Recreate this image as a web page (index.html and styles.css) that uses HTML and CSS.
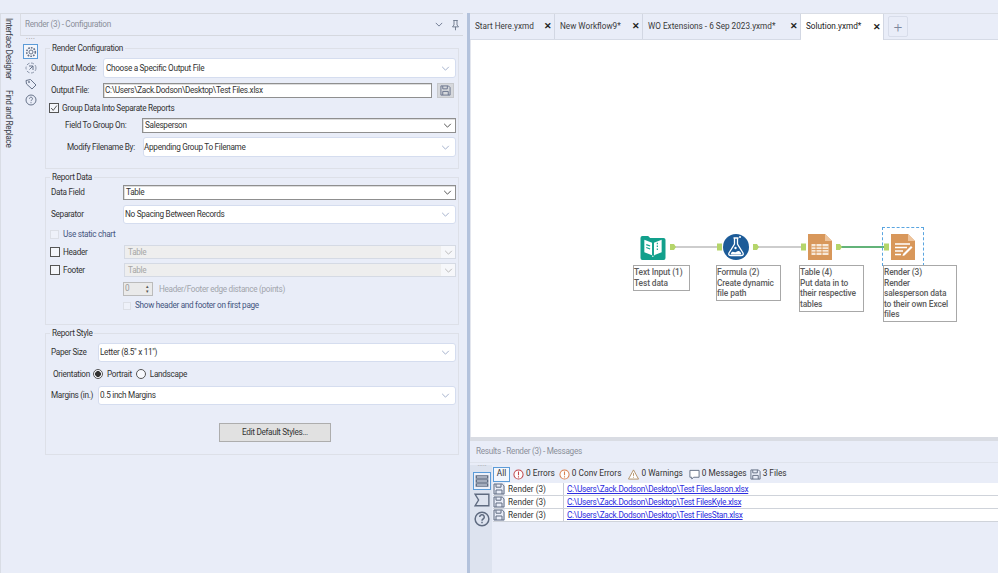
FILE: index.html
```html
<!DOCTYPE html>
<html lang="en">
<head>
<meta charset="utf-8">
<title>Render (3) - Configuration</title>
<link rel="stylesheet" href="styles.css">
</head>
<body>
<svg class="defs" width="0" height="0" aria-hidden="true">
  <symbol id="chev" viewBox="0 0 10 6"><path d="M1 1l4 4 4-4" fill="none" stroke="currentColor" stroke-width="1.1"/></symbol>
  <symbol id="save" viewBox="0 0 12 12"><path d="M1 1h8.2L11 2.8V11H1z" fill="none" stroke="currentColor" stroke-width="1"/><path d="M3 1.2v3h5v-3M3 11V7h6v4" fill="none" stroke="currentColor" stroke-width="1"/></symbol>
  <symbol id="alert" viewBox="0 0 12 12"><circle cx="6" cy="6" r="5" fill="#fff" stroke="currentColor" stroke-width="1.1"/><path d="M6 2.8v4M6 8v1.2" stroke="currentColor" stroke-width="1.2" fill="none"/></symbol>
</svg>

<aside class="rail">
  <span class="rail-tab">Interface Designer</span>
  <span class="rail-tab">Find and Replace</span>
</aside>

<section class="config">
  <header class="panel-head">
    <span class="panel-title">Render (3) - Configuration</span>
    <svg class="head-chev"><use href="#chev"/></svg>
    <svg class="pin" viewBox="0 0 12 14"><path d="M3 1h6M4 1v6L2 9.500h8L8 7V1M6 9.500V14" fill="none" stroke="#5f6b80" stroke-width="1.100"/></svg>
  </header>
  <div class="config-body">
    <nav class="side">
      <span class="dots">····</span>
      <span class="side-btn active">
        <svg viewBox="0 0 12 12"><circle cx="6" cy="6" r="2" fill="none" stroke="#67738a"/><circle cx="6" cy="6" r="4.300" fill="none" stroke="#67738a" stroke-width="1.600" stroke-dasharray="1.700 1.100"/></svg>
      </span>
      <span class="side-btn">
        <svg viewBox="0 0 12 12"><circle cx="6" cy="6" r="5" fill="none" stroke="#8a94a8" stroke-dasharray="3 1.600"/><path d="M4 4h4v4M8 4L4.500 7.500" fill="none" stroke="#67738a"/></svg>
      </span>
      <span class="side-btn">
        <svg viewBox="0 0 12 12"><path d="M1 2.500L5.500 1.500 11 7 7 11 1.500 6z" fill="none" stroke="#67738a"/><circle cx="4" cy="4" r=".9" fill="#67738a"/></svg>
      </span>
      <span class="side-btn">
        <svg viewBox="0 0 12 12"><circle cx="6" cy="6" r="5" fill="none" stroke="#67738a"/><path d="M4.500 4.600a1.500 1.500 0 1 1 2.200 1.400c-.5.300-.7.600-.7 1.100M6 8.200v1" fill="none" stroke="#67738a"/></svg>
      </span>
    </nav>
    <div class="form">
      <fieldset class="group g1">
        <legend>Render Configuration</legend>
        <div class="row h20 mt4 pl5"><label class="w52">Output Mode:</label><div class="select soft p2"><span>Choose a Specific Output File</span><svg class="chev"><use href="#chev"/></svg></div></div>
        <div class="row h15 mt5 pl5"><label class="w52">Output File:</label><div class="select hard path"><span>C:\Users\Zack.Dodson\Desktop\Test Files.xlsx</span></div><span class="save-btn"><svg><use href="#save"/></svg></span></div>
        <div class="row h10 mt5 pl3"><span class="check on"><svg viewBox="0 0 10 10"><path d="M1.500 5l2.500 3 4.500-6" fill="none" stroke="#444" stroke-width="1.100"/></svg></span><label class="check-label">Group Data Into Separate Reports</label></div>
        <div class="row h15 mt5 pl19"><label class="w77">Field To Group On:</label><div class="select hard"><span>Salesperson</span><svg class="chev dark"><use href="#chev"/></svg></div></div>
        <div class="row h20 mt4 pl21"><label class="w76">Modify Filename By:</label><div class="select soft p0"><span>Appending Group To Filename</span><svg class="chev"><use href="#chev"/></svg></div></div>
      </fieldset>

      <fieldset class="group g2">
        <legend>Report Data</legend>
        <div class="row h15 mt2 pl5"><label class="w72">Data Field</label><div class="select hard"><span>Table</span><svg class="chev dark"><use href="#chev"/></svg></div></div>
        <div class="row h19 mt5 pl5"><label class="w72">Separator</label><div class="select soft"><span>No Spacing Between Records</span><svg class="chev"><use href="#chev"/></svg></div></div>
        <div class="row h10 mt5 pl4"><span class="check faint"></span><label class="check-label blue">Use static chart</label></div>
        <div class="row h14 mt6 pl4"><span class="check"></span><label class="check-label w61">Header</label><div class="select off"><span>Table</span><i class="off-arrow"><svg class="chev"><use href="#chev"/></svg></i></div></div>
        <div class="row h14 mt4 pl4"><span class="check"></span><label class="check-label w61">Footer</label><div class="select off"><span>Table</span><i class="off-arrow"><svg class="chev"><use href="#chev"/></svg></i></div></div>
        <div class="row h14 mt5 pl77">
          <div class="spin"><span>0</span><i class="spin-arrows"><b>▴</b><b>▾</b></i></div>
          <label class="muted">Header/Footer edge distance (points)</label>
        </div>
        <div class="row h9 mt5 pl77"><span class="check faint small"></span><label class="check-label blue">Show header and footer on first page</label></div>
      </fieldset>

      <fieldset class="group g3">
        <legend>Report Style</legend>
        <div class="row h19 mt4 pl5"><label class="w47">Paper Size</label><div class="select soft"><span>Letter (8.5" x 11")</span><svg class="chev"><use href="#chev"/></svg></div></div>
        <div class="row h10 mt7 pl7">
          <label class="w40">Orientation</label>
          <span class="radio on"></span><label class="radio-label">Portrait</label>
          <span class="radio"></span><label class="radio-label">Landscape</label>
        </div>
        <div class="row h19 mt7 pl5"><label class="w47">Margins (in.)</label><div class="select soft"><span>0.5 inch Margins</span><svg class="chev"><use href="#chev"/></svg></div></div>
        <button class="edit-btn" type="button">Edit Default Styles...</button>
      </fieldset>
    </div>
  </div>
</section>

<div class="splitter"></div>

<main class="main">
  <div class="tabs">
    <div class="tab t1"><span>Start Here.yxmd</span><b>✕</b></div>
    <div class="tab t2"><span>New Workflow9*</span><b>✕</b></div>
    <div class="tab t3"><span>WO Extensions - 6 Sep 2023.yxmd*</span><b>✕</b></div>
    <div class="tab t4 current"><span>Solution.yxmd*</span><b>✕</b></div>
    <div class="tab-add">+</div>
  </div>

  <div class="canvas">
    <svg class="wires" width="528" height="120" viewBox="0 0 528 120">
      <path d="M204 207H246M287 207H330" transform="translate(0 -200)" stroke="#9b9b9b" stroke-width="1.200" fill="none"/>
      <path d="M370 7H413" stroke="#2f9a4c" stroke-width="1.500" fill="none"/>
      <g fill="#b5d56a">
        <path d="M199 4h4l2 3-2 3h-4zM282 4h4l2 3-2 3h-4zM365 4h4l2 3-2 3h-4z"/>
        <rect x="246" y="3.500" width="5" height="7"/><rect x="330" y="3.500" width="5" height="7"/><rect x="413" y="3.500" width="5" height="7"/>
      </g>
    </svg>

    <svg class="tool tool-text" viewBox="0 0 26 26">
      <path d="M0 3q0-2 2-2h6l2 2h14q2 0 2 2v19q0 2-2 2H2q-2 0-2-2z" fill="#12a08c"/>
      <path d="M4 5l8 3v13l-8-3zM22 5l-8 3v13l8-3z" fill="#fff"/>
      <path d="M12 21.500l1 1 1-1" stroke="#fff" fill="none"/>
      <path d="M17.500 8v1.500M17.500 11v1.500M17.500 14v1.500M6 10l4 1.500M6 13l4 1.500" stroke="#12a08c" stroke-width="1.200"/>
    </svg>
    <svg class="tool tool-formula" viewBox="0 0 26 26">
      <circle cx="13" cy="13" r="13" fill="#1c5b98"/>
      <path d="M10.500 4h5M11.500 4v6L6 19q-1 2.500 2 2.500h10q3 0 2-2.500l-5.500-9V4" fill="none" stroke="#fff" stroke-width="1.300"/>
      <path d="M8 19c2-3 3 0 5-1s3-2 5 1q.8 1.500-1 1.500H9q-1.800 0-1-1.500z" fill="#fff"/>
      <circle cx="12.500" cy="14" r="1.200" fill="#fff"/><circle cx="17" cy="3" r="1" fill="#fff"/>
    </svg>
    <svg class="tool tool-table" viewBox="0 0 24 26">
      <path d="M0 0h17l7 7v19H0z" fill="#d8975a"/>
      <path d="M17 0l7 7h-7z" fill="#eec49c"/>
      <path d="M3.500 10h17v11h-17z" fill="#f7e8d8"/>
      <path d="M3.500 12.800h17M3.500 15.500h17M3.500 18.200h17M8 10v11M14 10v11" stroke="#d8975a" stroke-width=".9"/>
    </svg>
    <svg class="tool tool-render" viewBox="0 0 24 26">
      <path d="M0 0h17l7 7v19H0z" fill="#d8975a"/>
      <path d="M17 0l7 7h-7z" fill="#eec49c"/>
      <path d="M4 10h15M4 13.500h12M4 17h8M4 20.500h6" stroke="#fff" stroke-width="1.500"/>
      <path d="M12 20l8-8 1.500 1.500-8 8-2 .5z" fill="#fff"/>
    </svg>

    <div class="selection"></div>

    <div class="note n1">Text Input (1)<br>Test data</div>
    <div class="note n2">Formula (2)<br>Create dynamic<br>file path</div>
    <div class="note n3">Table (4)<br>Put data in to<br>their respective<br>tables</div>
    <div class="note n4">Render (3)<br>Render<br>salesperson data<br>to their own Excel<br>files</div>
  </div>

  <section class="results">
    <header class="results-head">Results - Render (3) - Messages</header>
    <div class="results-body">
      <nav class="results-side">
        <span class="dots">·····</span>
        <span class="rs-btn active"><svg viewBox="0 0 14 14"><path d="M2 2.500h10v2H2zM2 6h10v2H2zM2 9.500h10v2H2z" fill="none" stroke="#5f6b80" stroke-width="1.200"/></svg></span>
        <span class="rs-btn"><svg viewBox="0 0 14 14"><path d="M1 2h12v10H1l3-5z" fill="none" stroke="#5f6b80" stroke-width="1.200"/></svg></span>
        <span class="rs-btn"><svg viewBox="0 0 14 14"><circle cx="7" cy="7" r="6" fill="none" stroke="#5f6b80" stroke-width="1.300"/><path d="M5 5.300a2 2 0 1 1 3 1.700c-.7.400-1 .8-1 1.500M7 9.500v1.300" fill="none" stroke="#5f6b80" stroke-width="1.300"/></svg></span>
      </nav>
      <div class="results-main">
        <div class="filters">
          <span class="all">All</span>
          <span class="filter f-err"><svg class="red"><use href="#alert"/></svg>0 Errors</span>
          <span class="filter f-conv"><svg class="orange"><use href="#alert"/></svg>0 Conv Errors</span>
          <span class="filter f-warn"><svg viewBox="0 0 12 12"><path d="M6 1l5.500 10H.5z" fill="#fff" stroke="#b08d62"/><path d="M6 4.500v3M6 8.500v1" stroke="#b08d62"/></svg>0 Warnings</span>
          <span class="filter f-msg"><svg viewBox="0 0 12 12"><path d="M1 1.500h10v7.500H5L3 11V9H1z" fill="#fff" stroke="#5f6b80"/></svg>0 Messages</span>
          <span class="filter f-files"><svg class="slate"><use href="#save"/></svg>3 Files</span>
        </div>
        <div class="msg"><svg class="msg-icon"><use href="#save"/></svg><span class="msg-name">Render (3)</span><a class="msg-link" href="#">C:\Users\Zack.Dodson\Desktop\Test FilesJason.xlsx</a></div>
        <div class="msg"><svg class="msg-icon"><use href="#save"/></svg><span class="msg-name">Render (3)</span><a class="msg-link" href="#">C:\Users\Zack.Dodson\Desktop\Test FilesKyle.xlsx</a></div>
        <div class="msg"><svg class="msg-icon"><use href="#save"/></svg><span class="msg-name">Render (3)</span><a class="msg-link" href="#">C:\Users\Zack.Dodson\Desktop\Test FilesStan.xlsx</a></div>
      </div>
    </div>
  </section>
</main>
</body>
</html>
```
FILE: styles.css
```css
* { box-sizing: border-box; }
html, body { margin: 0; height: 100%; }
body {
  width: 998px; height: 573px; overflow: hidden;
  display: flex; padding-top: 13px;
  background: #e9edf8; color: #333;
  font: 8.2px/1.2 "Roboto", "Noto Sans", sans-serif;
}
.defs { position: absolute; }

/* left rail */
.rail {
  width: 20px; flex: none; display: flex; flex-direction: column; align-items: flex-start; gap: 11px;
  padding: 4px 0 0 2px; border-top: 1px solid #d9dde5; border-left: 1px solid #d9dde5;
  letter-spacing: -.3px;
}
.rail-tab { writing-mode: vertical-rl; color: #3a3f4a; }

/* config */
.config { width: 447px; flex: none; display: flex; flex-direction: column; letter-spacing: -.3px; }
.panel-head {
  height: 23px; margin-right: 4px; display: flex; align-items: center;
  padding: 0 3px 0 4px; border: 1px solid #d5d8df; border-left-color: #d9dce3; border-right: 0;
}
.panel-title { flex: 1; color: #8b909a; }
.head-chev { width: 8px; height: 5px; color: #66718a; margin-right: 8px; }
.pin { width: 9px; height: 12px; }
.config-body { display: flex; flex: 1; }
.side { width: 25px; flex: none; display: flex; flex-direction: column; align-items: center; padding-right: 4px; }
.dots { height: 8px; line-height: 7px; color: #999; font-size: 9px; letter-spacing: 0; }
.side-btn { width: 15px; height: 15px; margin-bottom: 1px; display: flex; align-items: center; justify-content: center; }
.side-btn svg { width: 12px; height: 12px; }
.side-btn.active { background: #f4f6fb; border: 1px solid #5b9bd8; }
.form { width: 414px; padding-top: 6px; display: flex; flex-direction: column; gap: 2px; }

.group { margin: 0; padding: 0 2px 0 0; border: 1px solid #dde0e8; min-width: 0; }
.group legend { margin-left: 4px; padding: 0 2px; height: 12px; line-height: 12px; color: #333; }
.g1 { height: 127px; }
.g2 { height: 154px; }
.g3 { height: 128px; }

.row { display: flex; align-items: center; }
.h9 { height: 9px; } .h10 { height: 10px; } .h14 { height: 14px; } .h15 { height: 15px; }
.h19 { height: 19px; } .h20 { height: 20px; }
.mt2 { margin-top: 2px; } .mt4 { margin-top: 4px; } .mt5 { margin-top: 5px; } .mt6 { margin-top: 6px; } .mt7 { margin-top: 7px; }
.pl3 { padding-left: 3px; } .pl4 { padding-left: 4px; } .pl5 { padding-left: 5px; } .pl7 { padding-left: 7px; }
.pl19 { padding-left: 19px; } .pl21 { padding-left: 21px; } .pl77 { padding-left: 77px; }
.w40 { width: 40px; } .w47 { width: 47px; } .w52 { width: 52px; } .w72 { width: 72px; } .w76 { width: 76px; } .w77 { width: 77px; } .w61 { width: 61px; }
label { flex: none; white-space: nowrap; padding-top: 1px; }

.select { flex: 1; min-width: 0; height: 100%; display: flex; align-items: center; justify-content: space-between; padding: 0 5px 0 2px; background: #fff; color: #333; }
.select > span { padding-top: 1px; }
.select.soft { border: 1px solid #d5ddef; border-radius: 3px; padding-left: 1px; }
.select.soft.p2 { padding-left: 2px; }
.select.soft.p0 { padding-left: 0; }
.select.hard { border: 1px solid #8f8f8f; box-shadow: inset 1px 1px 0 #ddd; }
.select.path { padding-left: 1px; }
.select.off { background: #eeeeee; border: 1px solid #d5dae4; color: #a6a6a6; padding: 0 0 0 3px; }
.chev { width: 9px; height: 5px; color: #9cabc8; }
.chev.dark { color: #444; margin-right: -2px; }
.off-arrow { width: 14px; height: 100%; background: #f6f7fa; display: flex; align-items: center; justify-content: center; }
.off-arrow .chev { color: #b5b5b5; }
.save-btn { width: 17px; height: 15px; margin: 0 2px 0 5px; flex: none; background: #d6d8dc; border: 1px solid #c6c8cc; display: flex; align-items: center; justify-content: center; color: #65708a; }
.save-btn svg { width: 11px; height: 11px; }

.check { width: 10px; height: 10px; flex: none; border: 1px solid #555; background: #f4f6fb; display: flex; }
.check.faint { border-color: #dcdfe6; background: #eef1f9; width: 9px; height: 9px; }
.check.small { width: 8px; height: 8px; }
.check-label { margin-left: 3px; color: #333; }
.check-label.blue { margin-left: 4px; color: #44557f; }

.spin { width: 30px; height: 100%; flex: none; background: #eaeaea; border: 1px solid #bbb; display: flex; align-items: center; justify-content: space-between; padding-left: 1px; color: #999; }
.spin-arrows { width: 10px; display: flex; flex-direction: column; align-items: center; font-style: normal; font-size: 5px; line-height: 5px; color: #555; }
.spin-arrows b { font-weight: normal; }
.muted { margin-left: 6px; color: #a2a5ac; }

.radio { width: 10px; height: 10px; flex: none; border-radius: 50%; border: 1px solid #555; background: #f8f9fd; }
.radio.on { background: radial-gradient(circle, #333 0 2.600px, #f8f9fd 3.200px); }
.radio-label { margin: 0 4px 0 4px; }
.edit-btn {
  display: block; width: 112px; height: 19px; margin: 18px 0 0 173px; padding: 0;
  background: #e1e1e1; border: 1px solid #adadad; color: #333;
  font: inherit; letter-spacing: inherit;
}

.splitter { width: 3px; flex: none; background: #b3c2dc; }

/* main */
.main { flex: 1; min-width: 0; display: flex; flex-direction: column; }
.tabs { height: 27px; flex: none; display: flex; align-items: stretch; border-top: 1px solid #d9dde5; border-bottom: 1px solid #d6dbe6; }
.tab { display: flex; align-items: center; justify-content: space-between; padding: 0 2px 0 5px; border-right: 1px solid #d2d7e3; color: #3a3a3a; }
.tab b { font-size: 9px; font-weight: bold; color: #222; }
.t1 { width: 85px; } .t2 { width: 88px; } .t3 { width: 158px; } .t4 { width: 83px; }
.tab.current { background: #fff; margin-bottom: -1px; position: relative; color: #222; }
.tab-add { width: 20px; height: 21px; margin: 2px 0 0 4px; border: 1px solid #d8ddea; border-radius: 2px; display: flex; align-items: center; justify-content: center; font-size: 15px; font-weight: 300; color: #7c879c; }

.canvas { position: relative; flex: 1; background: #fff; border-left: 1px solid #e3e6ee; }
.wires { position: absolute; left: 0; top: 200px; }
.tool { position: absolute; width: 25px; height: 25px; }
.tool-text { left: 169px; top: 195px; width: 26px; }
.tool-formula { left: 252px; top: 194px; width: 26px; height: 26px; }
.tool-table { left: 337px; top: 194px; width: 24px; height: 26px; }
.tool-render { left: 420px; top: 194px; width: 24px; height: 26px; }
.selection { position: absolute; left: 411px; top: 187px; width: 42px; height: 39px; border: 1px dashed #5aa5e0; border-bottom: 0; }
.note {
  position: absolute; top: 225px; padding: 1px 0; background: #fff;
  border: 1px solid #a8a8a8; color: #5c5c5c; font: 500 8.4px/10.5px "Roboto", "Liberation Sans", sans-serif; letter-spacing: -.12px;
}
.n1 { left: 162px; width: 57px; height: 26px; }
.n2 { left: 245px; width: 65px; height: 36px; }
.n3 { left: 328px; width: 65px; height: 47px; }
.n4 { left: 412px; width: 74px; height: 57px; }

/* results */
.results { height: 136px; flex: none; display: flex; flex-direction: column; border-top: 4px solid #d9dce3; }
.results-head { height: 22px; flex: none; display: flex; align-items: center; padding-left: 6px; color: #8b909a; border-bottom: 1px solid #dfe3ec; letter-spacing: -.3px; }
.results-body { flex: 1; display: flex; padding-top: 2px; }
.results-side { width: 22px; flex: none; padding-left: 2px; background: #dde3ef; display: flex; flex-direction: column; align-items: center; gap: 1px; }
.results-side .dots { height: 6px; line-height: 3px; font-size: 7px; }
.rs-btn { width: 18px; height: 18px; display: flex; align-items: center; justify-content: center; }
.rs-btn svg { width: 16px; height: 16px; }
.rs-btn.active { background: #edf1fa; border: 1px solid #5b9bd8; }
.results-main { flex: 1; min-width: 0; padding-left: 1px; }
.filters { height: 18px; display: flex; align-items: center; color: #333; font-size: 8.3px; }
.all { width: 17px; height: 15px; margin-right: 3px; background: #f4f7fd; border: 1px solid #5b9bd8; display: flex; align-items: center; justify-content: center; }
.filter { display: flex; align-items: center; gap: 2px; white-space: nowrap; }
.filter svg { width: 11px; height: 11px; }
.f-err { margin-right: 4px; }
.f-conv { margin-right: 7px; }
.f-warn { margin-right: 6px; }
.f-msg { margin-right: 3px; }
.f-err svg { color: #c0454a; }
.f-conv svg { color: #d98050; }
.slate { color: #5f6b80; }
.msg { height: 12px; margin-bottom: 1px; display: flex; align-items: center; background: #fff; box-shadow: 0 1px 0 #cfd3da; }
.msg-icon { width: 12px; height: 12px; flex: none; color: #5f6b80; background: #e9edf8; }
.msg-name { width: 59px; flex: none; padding-left: 3px; border-right: 1px solid #c5cad5; height: 100%; line-height: 13px; color: #333; }
.msg-link { margin-left: 3px; padding-top: 1px; color: #2b2be0; font-size: 8.3px; letter-spacing: -.3px; }
```
